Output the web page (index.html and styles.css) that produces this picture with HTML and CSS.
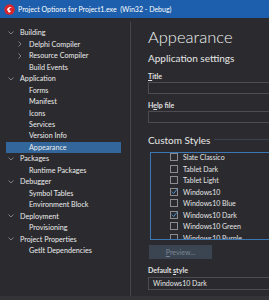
FILE: index.html
```html
<!DOCTYPE html>
<html lang="en">
<head>
    <meta charset="UTF-8">
    <title>Project Options for Project1.exe (Win32 - Debug)</title>
    <link rel="stylesheet" href="styles.css">
</head>
<body>
    <div class="titlebar">
        <svg class="app-icon" width="11" height="11" viewBox="0 0 11 11">
            <circle cx="5.5" cy="5.5" r="5.2" fill="#d8262c"/>
            <path d="M3 6.5 C3 3.5 6 2.2 8.2 3.6 C6.5 3.4 5 4.6 5.2 6.4 Z" fill="#fff"/>
            <circle cx="5.3" cy="7.2" r="1.2" fill="#fff"/>
        </svg>
        <span class="title-text">Project Options for Project1.exe &nbsp;(Win32 - Debug)</span>
    </div>

    <div class="main">
        <div class="tree">
            <div class="row lvl0"><span class="tw"><svg width="6" height="4" viewBox="0 0 6 4"><path d="M0.5 0.5 L3 3 L5.5 0.5" class="chev"/></svg></span>Building</div>
            <div class="row lvl1"><span class="tw"><svg width="4" height="6" viewBox="0 0 4 6"><path d="M0.5 0.5 L3 3 L0.5 5.5" class="chev"/></svg></span>Delphi Compiler</div>
            <div class="row lvl1"><span class="tw"><svg width="4" height="6" viewBox="0 0 4 6"><path d="M0.5 0.5 L3 3 L0.5 5.5" class="chev"/></svg></span>Resource Compiler</div>
            <div class="row lvl1"><span class="tw"></span>Build Events</div>
            <div class="row lvl0"><span class="tw"><svg width="6" height="4" viewBox="0 0 6 4"><path d="M0.5 0.5 L3 3 L5.5 0.5" class="chev"/></svg></span>Application</div>
            <div class="row lvl1"><span class="tw"></span>Forms</div>
            <div class="row lvl1"><span class="tw"></span>Manifest</div>
            <div class="row lvl1"><span class="tw"></span>Icons</div>
            <div class="row lvl1"><span class="tw"></span>Services</div>
            <div class="row lvl1"><span class="tw"></span>Version Info</div>
            <div class="row lvl1 selected"><span class="tw"></span>Appearance</div>
            <div class="row lvl0"><span class="tw"><svg width="6" height="4" viewBox="0 0 6 4"><path d="M0.5 0.5 L3 3 L5.5 0.5" class="chev"/></svg></span>Packages</div>
            <div class="row lvl1"><span class="tw"></span>Runtime Packages</div>
            <div class="row lvl0"><span class="tw"><svg width="6" height="4" viewBox="0 0 6 4"><path d="M0.5 0.5 L3 3 L5.5 0.5" class="chev"/></svg></span>Debugger</div>
            <div class="row lvl1"><span class="tw"></span>Symbol Tables</div>
            <div class="row lvl1"><span class="tw"></span>Environment Block</div>
            <div class="row lvl0"><span class="tw"><svg width="6" height="4" viewBox="0 0 6 4"><path d="M0.5 0.5 L3 3 L5.5 0.5" class="chev"/></svg></span>Deployment</div>
            <div class="row lvl1"><span class="tw"></span>Provisioning</div>
            <div class="row lvl0"><span class="tw"><svg width="6" height="4" viewBox="0 0 6 4"><path d="M0.5 0.5 L3 3 L5.5 0.5" class="chev"/></svg></span>Project Properties</div>
            <div class="row lvl1"><span class="tw"></span>GetIt Dependencies</div>
        </div>

        <div class="content">
            <h1>Appearance</h1>
            <h2>Application settings</h2>

            <label class="field-label first"><u>T</u>itle</label>
            <div class="input"></div>

            <label class="field-label">H<u>e</u>lp file</label>
            <div class="input"></div>

            <div class="group-title"><span>Custom Styles</span><div class="group-line"></div></div>

            <div class="listbox">
                <div class="item"><span class="cb"></span>Slate Classico</div>
                <div class="item"><span class="cb"></span>Tablet Dark</div>
                <div class="item"><span class="cb"></span>Tablet Light</div>
                <div class="item"><span class="cb"><svg width="7" height="7" viewBox="0 0 7 7"><path d="M0.8 3.6 L2.7 5.5 L6.2 1.1" class="check"/></svg></span>Windows10</div>
                <div class="item"><span class="cb"></span>Windows10 Blue</div>
                <div class="item"><span class="cb"><svg width="7" height="7" viewBox="0 0 7 7"><path d="M0.8 3.6 L2.7 5.5 L6.2 1.1" class="check"/></svg></span>Windows10 Dark</div>
                <div class="item"><span class="cb"></span>Windows10 Green</div>
                <div class="item"><span class="cb"></span>Windows10 Purple</div>
            </div>

            <button class="preview" disabled><u>P</u>review...</button>

            <label class="field-label last">Default <u>s</u>tyle</label>
            <div class="input combo">Windows10 Dark</div>
        </div>
    </div>
    <div class="bottom-strip"></div>
</body>
</html>
```

FILE: styles.css
```css
* {
    margin: 0;
    padding: 0;
    box-sizing: border-box;
}

body {
    background: #2b2b2f;
    font-family: Lato, "Noto Sans", sans-serif;
    color: #ececec;
    width: 269px;
    height: 300px;
    overflow: hidden;
}

.titlebar {
    height: 18px;
    background: #1d5fac;
    display: flex;
    align-items: center;
    padding-left: 4px;
    gap: 3px;
}

.title-text {
    color: #fff;
    font-size: 7px;
    white-space: nowrap;
}

.main {
    display: flex;
    height: 278px;
}

.tree {
    width: 126px;
    margin-left: 5px;
    margin-top: 4px;
    padding: 5px 9px 0 1px;
    border-right: 1px solid #45454b;
    font-size: 7.2px;
}

.row {
    height: 11.47px;
    display: flex;
    align-items: center;
    white-space: nowrap;
}

.row .tw {
    width: 14px;
    display: flex;
    align-items: center;
}

.lvl0 .tw svg {
    margin-left: 2px;
}

.lvl1 {
    padding-left: 9px;
}

.lvl1 .tw svg {
    margin-left: 3px;
}

.chev {
    fill: none;
    stroke: #8a8a8e;
    stroke-width: 0.9;
}

.row.selected {
    background: #33679b;
}

.content {
    flex: 1;
    padding-left: 17px;
    display: flex;
    flex-direction: column;
    white-space: nowrap;
    overflow: hidden;
}

h1 {
    font-weight: 300;
    font-size: 16.5px;
    line-height: 20px;
    margin-top: 9px;
    color: #f2f2f2;
}

h2 {
    font-weight: normal;
    font-size: 10px;
    line-height: 12px;
    margin-top: 5px;
    color: #e8e8e8;
}

.field-label {
    font-size: 7px;
    line-height: 9px;
    margin-top: 7px;
    font-weight: bold;
    color: #e0e0e0;
}

.field-label.first {
    margin-top: 8px;
}

.field-label.last {
    margin-top: 7px;
}

.input {
    height: 12px;
    margin-top: 1px;
    border: 1px solid #4c4c52;
    background: #2a2a2e;
    margin-right: -4px;
}

.group-title {
    display: flex;
    align-items: center;
    gap: 4px;
    margin-top: 11px;
    font-size: 10px;
    line-height: 12px;
    color: #e8e8e8;
}

.group-line {
    flex: 1;
    height: 1px;
    margin-top: -1px;
    background: #3c4350;
}

.listbox {
    margin-top: 6px;
    margin-left: 2px;
    margin-right: -4px;
    height: 88px;
    border: 1px solid #3a77b4;
    padding: 0 0 0 19px;
    overflow: hidden;
    font-size: 7px;
}

.item {
    height: 11.5px;
    display: flex;
    align-items: center;
    gap: 5px;
    color: #e4e4e4;
}

.item:first-child {
    margin-top: -1.5px;
}

.cb {
    width: 8px;
    height: 8px;
    border: 1px solid #8c8c90;
    display: flex;
    align-items: center;
    justify-content: center;
}

.cb svg {
    flex: none;
}

.check {
    fill: none;
    stroke: #4a90d0;
    stroke-width: 1;
}

.preview {
    width: 63px;
    height: 14px;
    margin-top: 5px;
    margin-left: 1px;
    border: none;
    background: #3b4552;
    color: #7a8594;
    font-family: inherit;
    font-size: 7px;
}

.combo {
    height: 13px;
    margin-top: 2px;
    font-size: 7px;
    line-height: 11px;
    padding-left: 4px;
    color: #e6e6e6;
}

.bottom-strip {
    height: 4px;
    background: #333338;
}
```
